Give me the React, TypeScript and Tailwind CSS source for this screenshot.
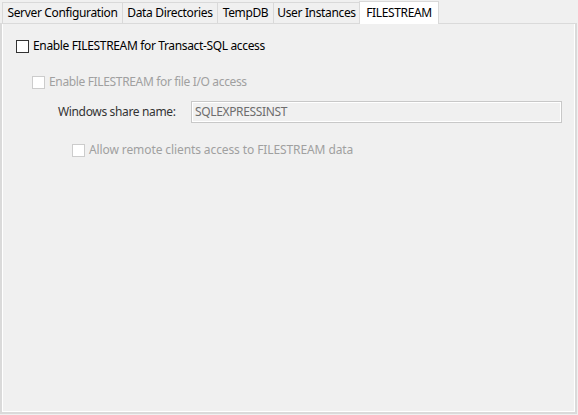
import React from "react";

const tabs: [string, string][] = [
  ["Server Configuration", "w-[120px]"],
  ["Data Directories", "w-[95px]"],
  ["TempDB", "w-[56px]"],
  ["User Instances", "w-[86px]"],
];

function Check({ disabled }: { disabled?: boolean }) {
  return (
    <span
      className={
        "inline-block w-[13px] h-[13px] shrink-0 border bg-white " +
        (disabled ? "border-[#cccccc]" : "border-[#333333]")
      }
    />
  );
}

export default function App() {
  return (
    <div
      className="w-[578px] h-[415px] bg-[#f0f0f0] relative text-[12px] text-[#000] overflow-hidden tracking-[-0.35px]"
      style={{ fontFamily: '"Noto Sans", "Open Sans", sans-serif' }}
    >
      <div className="flex items-end h-[23px] pl-[2px]">
        {tabs.map(([t, w]) => (
          <div
            key={t}
            className={
              w +
              " h-[21px] flex items-center justify-center border-t border-l border-[#d9d9d9] bg-[#f0f0f0] leading-none whitespace-nowrap"
            }
          >
            {t}
          </div>
        ))}
        <div className="w-[80px] h-[23px] flex justify-center items-start pt-[5px] border-t border-l border-r border-[#d9d9d9] bg-white leading-none -mb-[1px] relative z-10">
          FILESTREAM
        </div>
      </div>
      <div className="h-[391px] w-[577px] border-[2px] border-[#dadada] border-t-[1px]">
        <div className="h-full border border-white border-t-0 bg-[#f0f0f0] relative">
          <div className="flex flex-col">
            <div className="flex items-center gap-[4px] ml-[13px] mt-[15px] h-[14px]">
              <Check />
              <span className="leading-none">Enable FILESTREAM for Transact-SQL access</span>
            </div>
            <div className="flex items-center gap-[4px] ml-[29px] mt-[22px] h-[14px] text-[#a0a0a0]">
              <Check disabled />
              <span className="leading-none">Enable FILESTREAM for file I/O access</span>
            </div>
            <div className="flex items-center ml-[55px] mt-[12px]">
              <span className="w-[133px] leading-none text-[#333]">Windows share name:</span>
              <div className="w-[371px] h-[22px] border border-[#c8c8c8] bg-[#f0f0f0] flex items-center">
                <div className="w-full h-full border border-white flex items-center pl-[2px] text-[#6d6d6d] leading-none">
                  SQLEXPRESSINST
                </div>
              </div>
            </div>
            <div className="flex items-center gap-[4px] ml-[69px] mt-[20px] h-[14px] text-[#a0a0a0] tracking-[-0.1px]">
              <Check disabled />
              <span className="leading-none">Allow remote clients access to FILESTREAM data</span>
            </div>
          </div>
        </div>
      </div>
    </div>
  );
}
